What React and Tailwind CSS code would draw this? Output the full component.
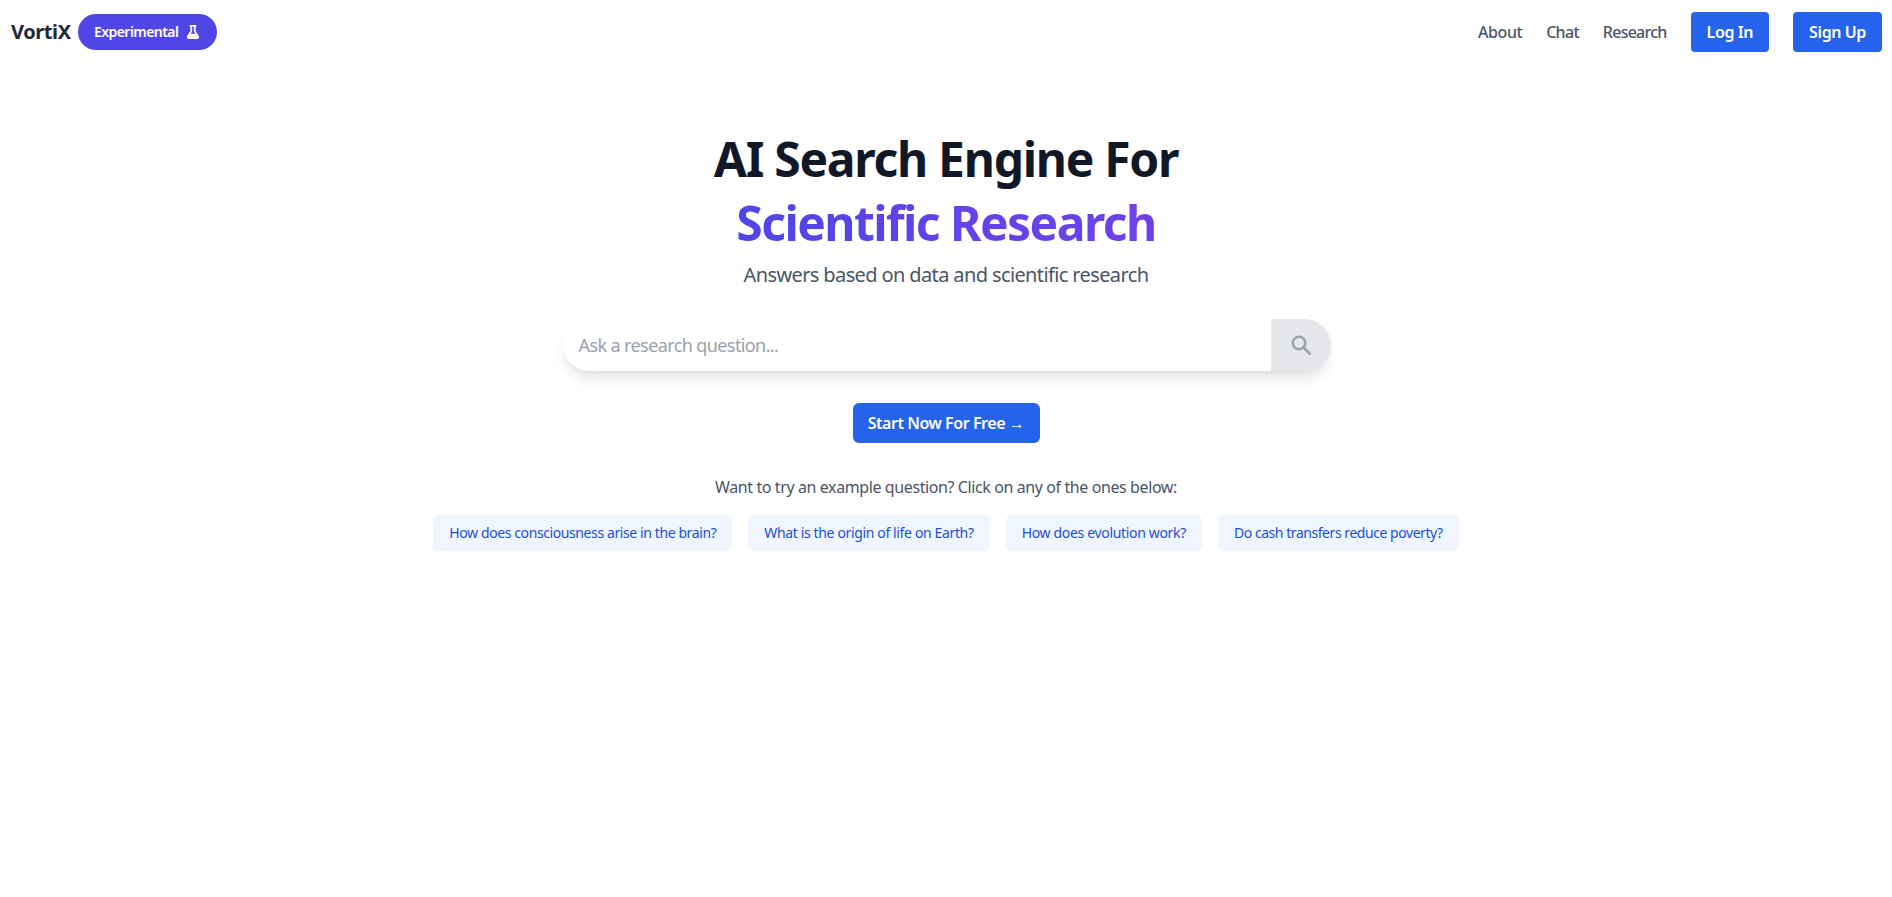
import React from "react";
import { FaFlask } from "react-icons/fa";

const examples = [
  { q: "How does consciousness arise in the brain?", t: "tracking-[-0.4px]" },
  { q: "What is the origin of life on Earth?", t: "tracking-[-0.36px]" },
  { q: "How does evolution work?", t: "tracking-[-0.33px]" },
  { q: "Do cash transfers reduce poverty?", t: "tracking-[-0.45px]" },
];

export default function App() {
  return (
    <div className="min-h-[897px] bg-white font-['Noto_Sans',sans-serif] text-gray-900">
      <header className="flex h-16 items-center justify-between pl-[11px] pr-[10px]">
        <div className="flex items-center gap-[7px]">
          <span className="text-xl font-bold tracking-[-0.4px] text-gray-800">VortiX</span>
          <span className="flex h-9 w-[139px] items-center justify-center gap-2 rounded-full bg-[#4f46e5] text-sm font-semibold tracking-[-0.55px] text-white">
            Experimental
            <FaFlask className="h-[14px] w-[14px]" />
          </span>
        </div>
        <nav className="flex items-center gap-6">
          <a className="text-base font-medium tracking-[-0.45px] text-gray-600">About</a>
          <a className="text-base font-medium tracking-[-0.7px] text-gray-600">Chat</a>
          <a className="text-base font-medium tracking-[-0.75px] text-gray-600">Research</a>
          <button className="h-10 rounded bg-[#2563eb] px-4 text-base font-semibold tracking-[-0.4px] text-white">Log In</button>
          <button className="h-10 rounded bg-[#2563eb] px-4 text-base font-semibold tracking-[-0.4px] text-white">Sign Up</button>
        </nav>
      </header>
      <main className="flex flex-col items-center pt-[62px]">
        <h1 className="text-center text-5xl font-bold leading-[65px] tracking-[-1.28px] text-gray-900">AI Search Engine For</h1>
        <h2 className="bg-gradient-to-r from-[#4f46e5] to-[#7040ea] bg-clip-text text-center text-5xl font-bold leading-[63px] tracking-[-1.55px] text-transparent">Scientific Research</h2>
        <p className="mt-[7px] text-xl tracking-[-0.62px] text-gray-600">Answers based on data and scientific research</p>
        <div className="ml-px mt-[30px] flex h-[52px] w-[768px] overflow-hidden rounded-full bg-white shadow-lg">
          <input
            placeholder="Ask a research question..."
            className="min-w-0 flex-1 bg-transparent px-4 text-lg tracking-[-0.6px] outline-none placeholder:text-gray-400"
          />
          <button className="flex w-[60px] items-center justify-center bg-[#e5e7eb]">
            <svg viewBox="0 0 20 20" className="h-5 w-5" fill="none" stroke="#9ca3af" strokeWidth="2.6">
              <circle cx="8" cy="8" r="6.2" />
              <path d="M12.5 12.5 L19 19" strokeLinecap="round" />
            </svg>
          </button>
        </div>
        <button className="mt-8 h-10 w-[187px] rounded-md bg-[#2563eb] text-base font-semibold tracking-[-0.45px] text-white">Start Now For Free →</button>
        <p className="mt-8 text-base tracking-[-0.4px] text-gray-600">Want to try an example question? Click on any of the ones below:</p>
        <div className="mt-4 flex gap-4">
          {examples.map(({ q, t }) => (
            <button key={q} className={`h-9 rounded-md bg-[#eff6ff] px-4 text-sm text-[#1d4ed8] ${t}`}>{q}</button>
          ))}
        </div>
      </main>
    </div>
  );
}
